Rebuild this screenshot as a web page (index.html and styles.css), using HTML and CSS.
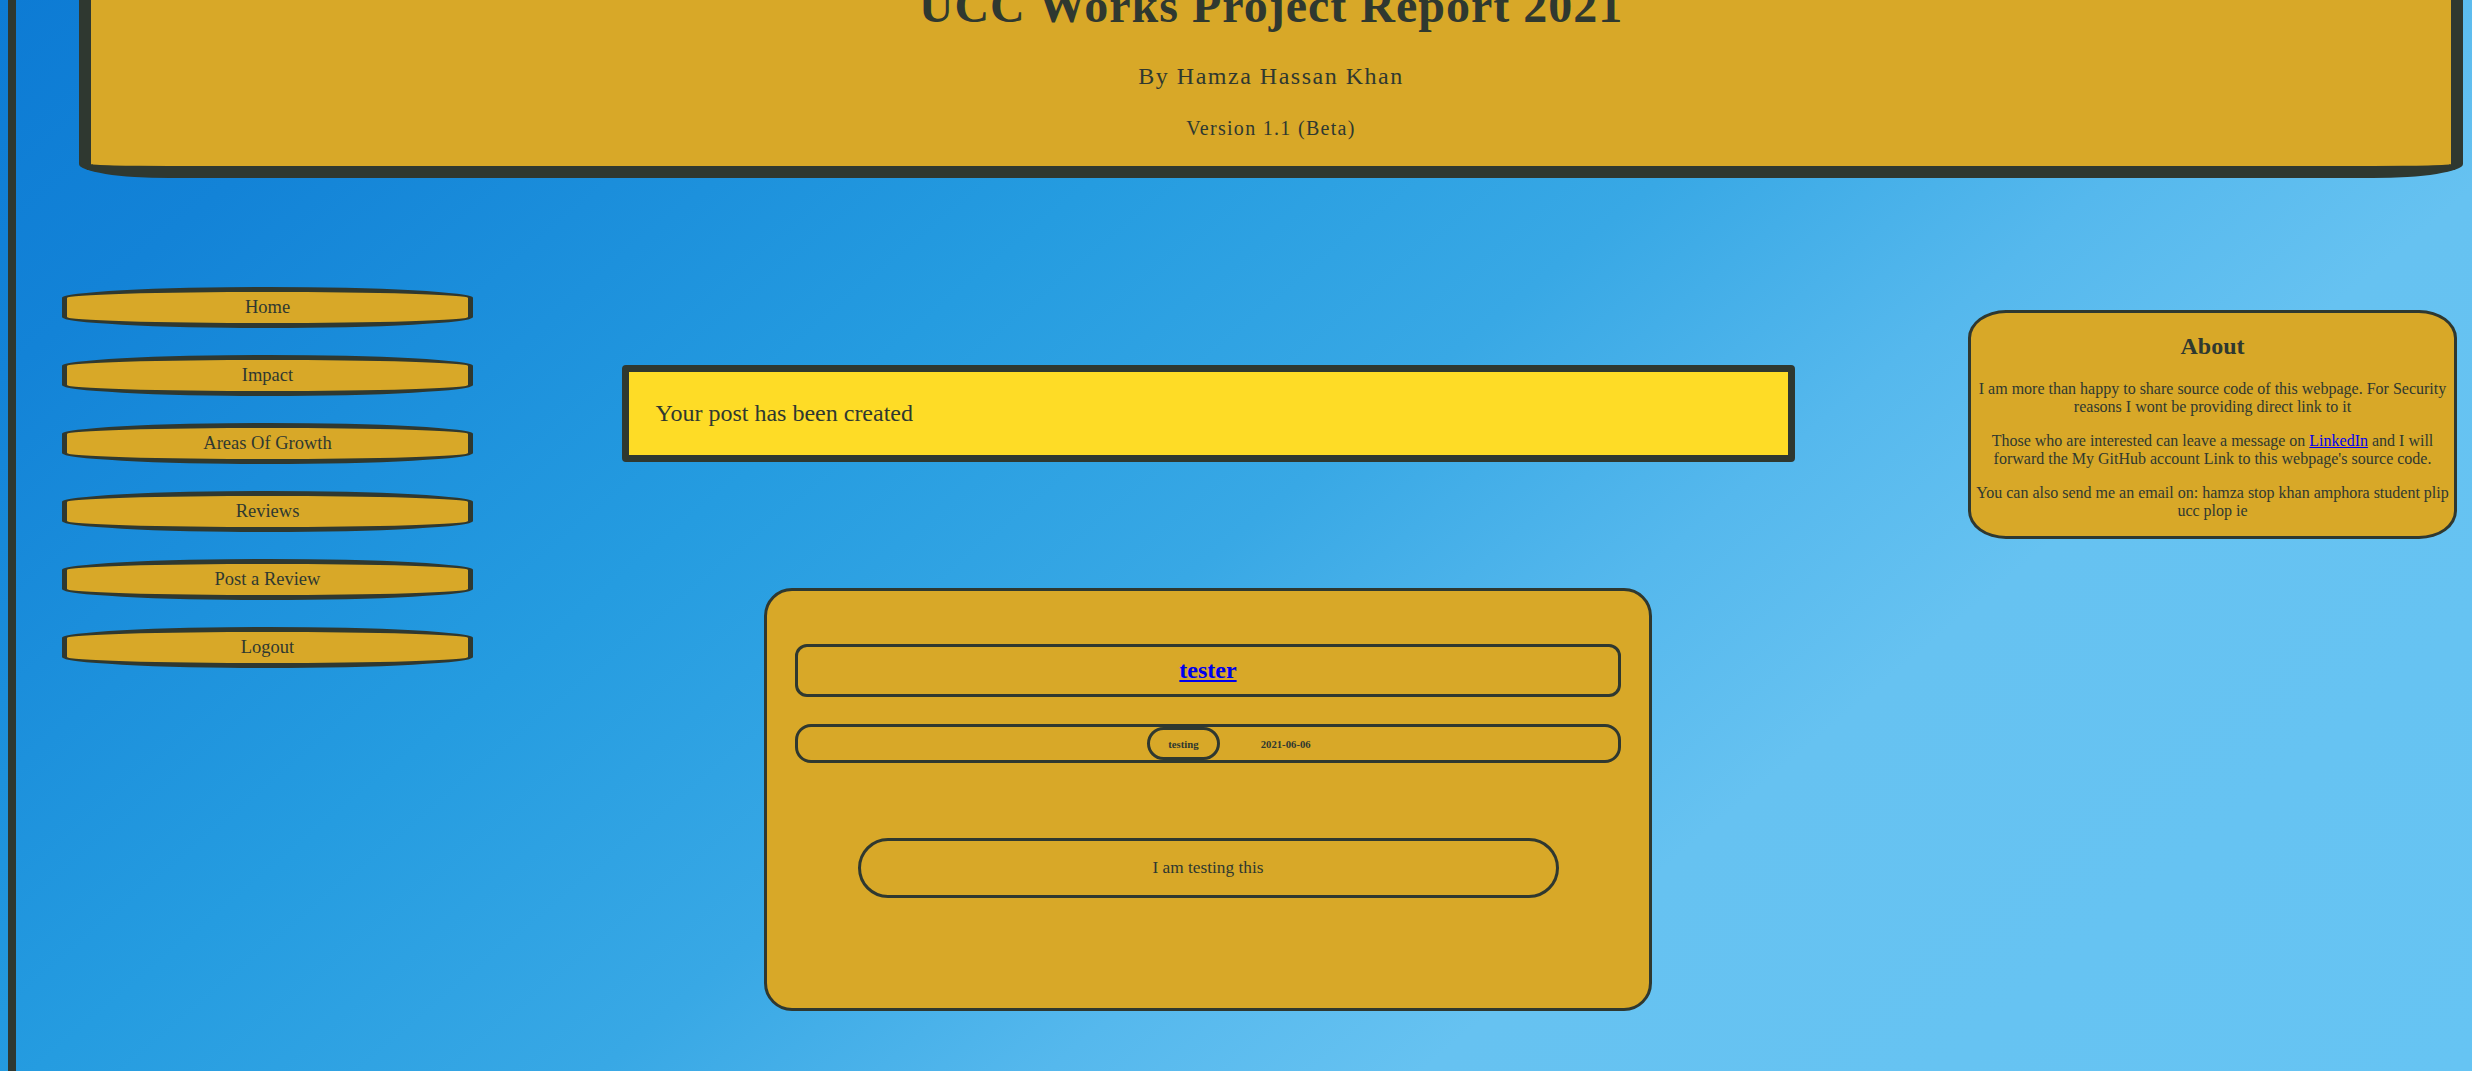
FILE: index.html
```html
<!DOCTYPE html>
<html lang="en">
<head>
<meta charset="utf-8">
<title>UCC Works Project Report 2021</title>
<link rel="stylesheet" href="styles.css">
</head>
<body>
<div class="page">
  <header class="site-header">
    <h1 class="site-title">UCC Works Project Report 2021</h1>
    <p class="site-author">By Hamza Hassan Khan</p>
    <p class="site-version">Version 1.1 (Beta)</p>
  </header>

  <div class="layout">
    <nav class="nav">
      <a class="nav-btn" href="#">Home</a>
      <a class="nav-btn" href="#">Impact</a>
      <a class="nav-btn" href="#">Areas Of Growth</a>
      <a class="nav-btn" href="#">Reviews</a>
      <a class="nav-btn" href="#">Post a Review</a>
      <a class="nav-btn" href="#">Logout</a>
    </nav>

    <main class="main">
      <div class="notice">Your post has been created</div>

      <article class="post-card">
        <div class="post-title"><h2><a href="#">tester</a></h2></div>
        <div class="post-meta">
          <h6 class="post-tag">testing</h6>
          <h6 class="post-date">2021-06-06</h6>
        </div>
        <div class="post-body">I am testing this</div>
      </article>
    </main>

    <aside class="about">
      <h2>About</h2>
      <p>I am more than happy to share source code of this webpage. For Security reasons I wont be providing direct link to it</p>
      <p>Those who are interested can leave a message on <a href="#">LinkedIn</a> and I will forward the My GitHub account Link to this webpage's source code.</p>
      <p>You can also send me an email on: hamza stop khan amphora student plip ucc plop ie</p>
    </aside>
  </div>
</div>
</body>
</html>
```

FILE: styles.css
```css
html {
  overflow: hidden;
}

body {
  margin: 0;
  min-height: 100vh;
  font-family: "Liberation Serif", "Times New Roman", serif;
  color: #2f3830;
  background: linear-gradient(140deg, #0d7bd4 0%, #1383d7 12%, #259ce0 35%, #38a8e5 50%, #55b8ed 62%, #66c2f1 72%, #66c4f3 100%);
}

.page {
  display: flow-root;
  margin-left: 8px;
  border-left: 8px solid #2f3830;
  min-height: 100vh;
  box-sizing: border-box;
}

/* Header */
.site-header {
  margin: -22px 9px 0 63px;
  background: #d8a828;
  border: 12px solid #2f3830;
  border-top: 0;
  border-bottom-left-radius: 90px 14px;
  border-bottom-right-radius: 90px 14px;
  padding: 0 0 26px;
  text-align: center;
}

.site-title {
  margin: 0;
  font-size: 48px;
  font-weight: bold;
  letter-spacing: 1px;
  line-height: normal;
}

.site-author {
  margin: 30px 0 0;
  font-size: 24px;
  letter-spacing: 1.5px;
  line-height: normal;
}

.site-version {
  margin: 27px 0 0;
  font-size: 20px;
  letter-spacing: 1.3px;
  line-height: normal;
}

/* Layout */
.layout {
  display: flex;
  align-items: flex-start;
  margin-left: 46px;
}

.nav {
  flex: 0 0 411px;
  display: flex;
  flex-direction: column;
  gap: 27px;
  padding-top: 109px;
}

.nav-btn {
  height: 41px;
  box-sizing: border-box;
  border: 5px solid #2f3830;
  border-radius: 50% / 11px;
  background: #d8a828;
  color: #2f3830;
  text-decoration: none;
  font-size: 18.5px;
  display: flex;
  align-items: center;
  justify-content: center;
}

.main {
  flex: 0 0 1470px;
  display: flex;
  flex-direction: column;
  align-items: center;
  padding-top: 187px;
}

.notice {
  width: 1173px;
  box-sizing: border-box;
  background: #fedc26;
  border: 7px solid #2f3830;
  border-radius: 4px;
  padding: 28px 27px;
  font-size: 24px;
  line-height: normal;
}

.post-card {
  margin-top: 126px;
  width: 888px;
  box-sizing: border-box;
  background: #d8a828;
  border: 3px solid #2f3830;
  border-radius: 28px;
  padding: 53px 28px 110px;
}

.post-title {
  height: 53px;
  box-sizing: border-box;
  border: 3px solid #2f3830;
  border-radius: 12px;
  display: flex;
  align-items: center;
  justify-content: center;
}

.post-title h2 {
  margin: 0;
  font-size: 24px;
  line-height: normal;
}

.post-title a {
  color: #0000ee;
}

.post-meta {
  margin-top: 27px;
  height: 39px;
  box-sizing: border-box;
  border: 3px solid #2f3830;
  border-radius: 16px;
  display: flex;
  align-items: center;
  justify-content: center;
  gap: 41px;
  padding-left: 42px;
}

.post-meta h6 {
  margin: 0;
  font-size: 10.72px;
  font-weight: bold;
  line-height: normal;
}

.post-tag {
  border: 3px solid #2f3830;
  border-radius: 20px;
  padding: 7.5px 18px;
}

.post-body {
  margin: 75px auto 0;
  width: 701px;
  height: 60px;
  box-sizing: border-box;
  border: 3px solid #2f3830;
  border-radius: 30px;
  display: flex;
  align-items: center;
  justify-content: center;
  font-size: 17.3px;
}

/* About */
.about {
  flex: 0 0 489px;
  box-sizing: border-box;
  margin-left: 25px;
  margin-top: 132px;
  background: #d8a828;
  border: 3px solid #2f3830;
  border-radius: 38px / 28px;
  padding: 0 5px;
  text-align: center;
}

.about h2 {
  margin: 19.92px 0;
  font-size: 24px;
  line-height: normal;
}

.about p {
  margin: 16px 0;
  font-size: 16px;
  line-height: normal;
}

.about a {
  color: #0000ee;
}
```
